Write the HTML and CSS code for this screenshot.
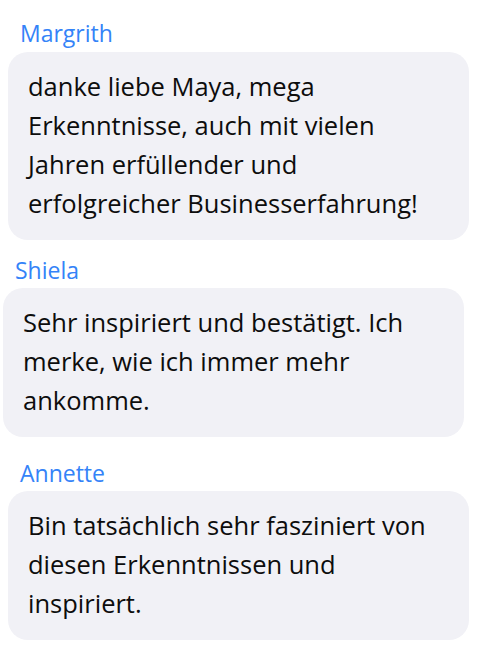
FILE: index.html
```html
<!DOCTYPE html>
<html lang="de">
<head>
<meta charset="utf-8">
<link rel="stylesheet" href="styles.css">
</head>
<body>
<div class="chat">
  <div class="msg msg-1">
    <div class="name">Margrith</div>
    <div class="bubble">danke liebe Maya, mega<br>Erkenntnisse, auch mit vielen<br>Jahren erfüllender und<br>erfolgreicher Businesserfahrung!</div>
  </div>
  <div class="msg msg-2">
    <div class="name">Shiela</div>
    <div class="bubble">Sehr inspiriert und bestätigt. Ich<br>merke, wie ich immer mehr<br>ankomme.</div>
  </div>
  <div class="msg msg-3">
    <div class="name">Annette</div>
    <div class="bubble">Bin tatsächlich sehr fasziniert von<br>diesen Erkenntnissen und<br>inspiriert.</div>
  </div>
</div>
</body>
</html>
```

FILE: styles.css
```css
html, body {
  margin: 0;
  padding: 0;
  background: #ffffff;
}
body {
  font-family: "Open Sans", "Noto Sans", sans-serif;
  color: #0d0d0d;
}
.chat {
  display: flex;
  flex-direction: column;
  width: 497px;
}
.msg {
  display: flex;
  flex-direction: column;
}
.name {
  font-size: 23px;
  line-height: 26px;
  color: #3483f8;
  padding-left: 12px;
  margin-bottom: 5px;
}
.bubble {
  width: 461px;
  box-sizing: border-box;
  background: #f1f1f6;
  border-radius: 20px;
  padding: 15px 20px 17px 20px;
  font-size: 25.5px;
  line-height: 39px;
}
.msg-1 {
  margin-top: 20px;
  margin-left: 8px;
}
.msg-1 .bubble {
  margin-top: 1px;
}
.msg-2 {
  margin-top: 17px;
  margin-left: 3px;
}
.msg-3 {
  margin-top: 23px;
  margin-left: 8px;
}
```
